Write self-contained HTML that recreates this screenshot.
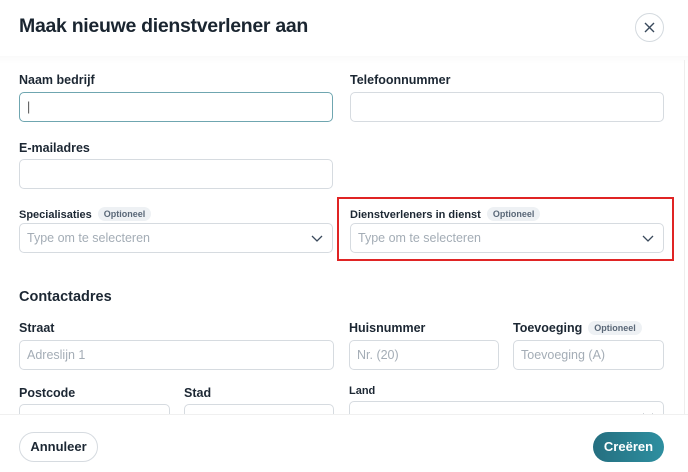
<!DOCTYPE html>
<html><head><meta charset="utf-8"><style>
*{box-sizing:border-box;margin:0;padding:0}
body{width:688px;height:472px;background:#fff;font-family:"Liberation Sans",sans-serif;color:#1c2733;position:relative;overflow:hidden}
.a{position:absolute}
h1{position:absolute;left:19px;top:15px;font-size:19.5px;font-weight:bold;letter-spacing:-0.3px;color:#1a2530}
.lbl{position:absolute;font-size:12.5px;font-weight:bold;color:#1c2733;white-space:nowrap}
.lbl.s{font-size:11px}
.badge{display:inline-block;font-size:9px;font-weight:bold;color:#5a6878;background:#eef1f4;border-radius:8px;padding:2px 6px;margin-left:6px;vertical-align:1px}
.in{position:absolute;border:1px solid #d6dbe0;border-radius:5px;height:30px;font-size:12.5px;color:#a4adb6;padding:0 7px;line-height:28px;white-space:nowrap}
.chev{position:absolute;right:8px;top:9px}
</style></head><body>
<h1>Maak nieuwe dienstverlener aan</h1>
<div class="a" style="left:635px;top:13px;width:29px;height:29px;border:1px solid #d4dadf;border-radius:50%">
<svg width="27" height="27" viewBox="0 0 27 27"><path d="M9 9L18 18M18 9L9 18" stroke="#3a4a5c" stroke-width="1.4"/></svg></div>
<div class="a" style="left:0;top:56px;width:688px;height:8px;background:linear-gradient(#fafafa,#fff)"></div>
<div class="a" style="left:684px;top:60px;width:1px;height:354px;background:#eee"></div>

<div class="lbl" style="left:19px;top:73px">Naam bedrijf</div>
<div class="in" style="left:19px;top:92px;width:314px;border-color:#6fa6b0;color:#555">|</div>
<div class="lbl" style="left:350px;top:73px">Telefoonnummer</div>
<div class="in" style="left:350px;top:92px;width:314px"></div>

<div class="lbl" style="left:19px;top:141px">E-mailadres</div>
<div class="in" style="left:19px;top:159px;width:314px"></div>

<div class="lbl s" style="left:19px;top:207px">Specialisaties<span class="badge">Optioneel</span></div>
<div class="in" style="left:19px;top:223px;width:314px">Type om te selecteren<svg class="chev" width="14" height="10" viewBox="0 0 14 10"><path d="M2 3L7 8L12 3" fill="none" stroke="#3a4a5c" stroke-width="1.3"/></svg></div>

<div class="a" style="left:337px;top:197px;width:337px;height:64px;border:2px solid #e02424"></div>
<div class="lbl s" style="left:350px;top:207px">Dienstverleners in dienst<span class="badge">Optioneel</span></div>
<div class="in" style="left:350px;top:223px;width:314px">Type om te selecteren<svg class="chev" width="14" height="10" viewBox="0 0 14 10"><path d="M2 3L7 8L12 3" fill="none" stroke="#3a4a5c" stroke-width="1.3"/></svg></div>

<div class="lbl" style="left:19px;top:289px;font-size:14.5px">Contactadres</div>
<div class="lbl" style="left:19px;top:321px">Straat</div>
<div class="in" style="left:19px;top:340px;width:315px">Adreslijn 1</div>
<div class="lbl" style="left:349px;top:321px">Huisnummer</div>
<div class="in" style="left:349px;top:340px;width:150px">Nr. (20)</div>
<div class="lbl" style="left:513px;top:321px">Toevoeging<span class="badge">Optioneel</span></div>
<div class="in" style="left:513px;top:340px;width:151px">Toevoeging (A)</div>

<div class="lbl" style="left:19px;top:386px">Postcode</div>
<div class="in" style="left:19px;top:404px;width:151px"></div>
<div class="lbl" style="left:184px;top:386px">Stad</div>
<div class="in" style="left:184px;top:404px;width:150px"></div>
<div class="lbl s" style="left:349px;top:385px">Land</div>
<div class="in" style="left:349px;top:401px;width:315px"><svg class="chev" width="14" height="10" viewBox="0 0 14 10"><path d="M2 3L7 8L12 3" fill="none" stroke="#3a4a5c" stroke-width="1.3"/></svg></div>

<div class="a" style="left:0;top:414px;width:688px;height:58px;background:#fff;border-top:1px solid #f0f0f0"></div>
<div class="a" style="left:19px;top:432px;width:79px;height:30px;border:1px solid #d6dbe0;border-radius:15px;font-size:13px;font-weight:bold;line-height:28px;text-align:center;color:#1c2733">Annuleer</div>
<div class="a" style="left:593px;top:432px;width:71px;height:30px;border-radius:15px;background:linear-gradient(90deg,#256f80,#2e8fa0);font-size:13px;font-weight:bold;line-height:30px;text-align:center;color:#fff">Creëren</div>
</body></html>
